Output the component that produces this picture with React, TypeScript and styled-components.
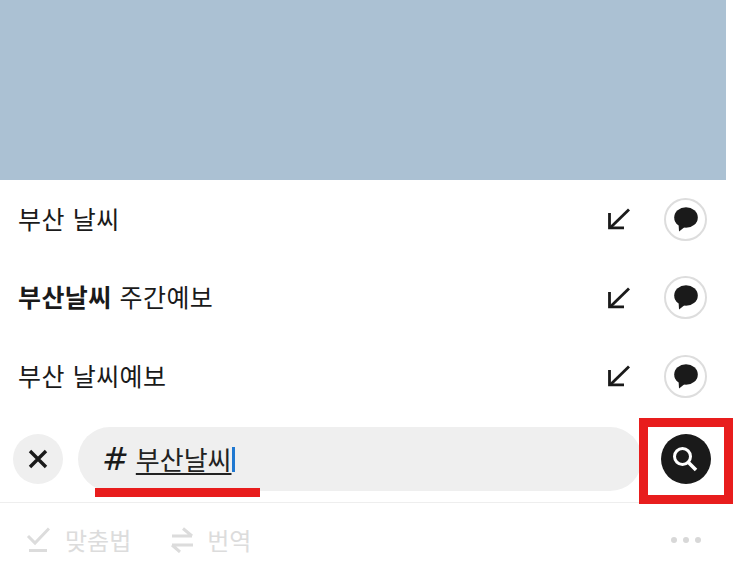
import React from "react";
import styled, { createGlobalStyle } from "styled-components";

const Global = createGlobalStyle`
  html, body { margin: 0; padding: 0; background: #fff; }
  body { font-family: "Roboto", "Noto Sans CJK KR", sans-serif; overflow: hidden; }
`;

const Page = styled.div`
  position: relative;
  width: 733px;
  height: 577px;
  overflow: hidden;
  background: #fff;
`;

const Column = styled.div`
  width: 726px;
`;

const Banner = styled.div`
  height: 180px;
  background: #abc1d3;
`;

const List = styled.ul`
  list-style: none;
  margin: 0;
  padding: 0;
  height: 236px;
`;

const Row = styled.li`
  display: flex;
  align-items: center;
  height: 78.5px;
  padding: 0 19px 0 18px;
  box-sizing: border-box;
`;

const RowText = styled.span`
  flex: 1;
  margin-bottom: 3px;
  font-family: "Noto Sans CJK KR", sans-serif;
  font-size: 25px;
  line-height: 32px;
  color: #1a1a1a;
  letter-spacing: 0.4px;
  word-spacing: 2px;
  b { font-weight: 700; }
`;

const ArrowIcon = styled.svg`
  width: 26px;
  height: 26px;
  margin-right: 32px;
  flex: none;
`;

const BubbleButton = styled.span`
  display: flex;
  align-items: center;
  justify-content: center;
  width: 43px;
  height: 43px;
  border: 2px solid #dddddd;
  border-radius: 50%;
  box-sizing: border-box;
  flex: none;
`;

const InputRow = styled.div`
  display: flex;
  align-items: center;
  height: 86px;
  padding: 0 15px 0 13px;
  box-sizing: border-box;
`;

const CloseButton = styled.span`
  display: flex;
  align-items: center;
  justify-content: center;
  width: 50px;
  height: 50px;
  border-radius: 50%;
  background: #efefef;
  flex: none;
`;

const Pill = styled.div`
  display: flex;
  align-items: center;
  width: 564px;
  height: 64px;
  margin: 0 19px 0 15px;
  padding-left: 24px;
  box-sizing: border-box;
  border-radius: 32px;
  background: #efefef;
  flex: none;
`;

const Hash = styled.span`
  font-family: "DejaVu Sans", sans-serif;
  font-size: 32px;
  font-style: oblique;
  line-height: 36px;
  color: #1a1a1a;
  margin-right: 7px;
`;

const Query = styled.span`
  font-family: "Noto Sans CJK KR", sans-serif;
  font-size: 26px;
  line-height: 32px;
  color: #222;
  text-decoration: underline;
  text-underline-offset: 3px;
  text-decoration-thickness: 1.5px;
`;

const Caret = styled.span`
  width: 3px;
  height: 25px;
  background: #1f78d1;
  flex: none;
`;

const SearchButton = styled.span`
  display: flex;
  align-items: center;
  justify-content: center;
  width: 50px;
  height: 50px;
  border-radius: 50%;
  background: #1a1a1a;
  flex: none;
`;

const Toolbar = styled.div`
  display: flex;
  align-items: center;
  height: 75px;
  padding: 0 25px 0 26px;
  border-top: 1px solid #eeeeee;
  box-sizing: border-box;
`;

const Tool = styled.span<{ $gap: number; $after: number }>`
  display: flex;
  align-items: center;
  margin-right: ${(p) => p.$after}px;
  font-family: "Noto Sans CJK KR", sans-serif;
  font-size: 24px;
  line-height: 32px;
  color: #dcdcdc;
  svg { margin-right: ${(p) => p.$gap}px; flex: none; }
`;

const Dots = styled.span`
  display: flex;
  gap: 6px;
  margin-left: auto;
`;

const Dot = styled.i`
  display: block;
  width: 6px;
  height: 6px;
  border-radius: 50%;
  background: #d8d8d8;
`;

const RedUnderline = styled.div`
  position: absolute;
  left: 95px;
  top: 488px;
  width: 165px;
  height: 9px;
  background: #e81d1d;
`;

const RedBox = styled.div`
  position: absolute;
  left: 639px;
  top: 418px;
  width: 94px;
  height: 86px;
  border: 9px solid #e81d1d;
  box-sizing: border-box;
`;

const Arrow = () => (
  <ArrowIcon viewBox="0 0 26 26" fill="none" stroke="#1a1a1a" strokeWidth="2.8">
    <path d="M23 3.500 L4 22" />
    <path d="M3.500 7 V21.800 H18" />
  </ArrowIcon>
);

const Bubble = () => (
  <BubbleButton>
    <svg width="24" height="25" viewBox="0 0 24 25" fill="#1a1a1a">
      <ellipse cx="12" cy="10.500" rx="11.800" ry="10.300" />
      <path d="M4.500 16 L5 24.500 L12 19 Z" />
    </svg>
  </BubbleButton>
);

export default function App() {
  return (
    <Page>
      <Global />
      <Column>
        <Banner />
        <List>
          <Row>
            <RowText>부산 날씨</RowText>
            <Arrow />
            <Bubble />
          </Row>
          <Row>
            <RowText>
              <b>부산날씨</b> 주간예보
            </RowText>
            <Arrow />
            <Bubble />
          </Row>
          <Row>
            <RowText>부산 날씨예보</RowText>
            <Arrow />
            <Bubble />
          </Row>
        </List>
        <InputRow>
          <CloseButton>
            <svg width="20" height="20" viewBox="0 0 20 20" stroke="#1a1a1a" strokeWidth="3.4">
              <path d="M2 2 L18 18 M18 2 L2 18" />
            </svg>
          </CloseButton>
          <Pill>
            <Hash>#</Hash>
            <Query>부산날씨</Query>
            <Caret />
          </Pill>
          <SearchButton>
            <svg width="26" height="26" viewBox="0 0 26 26" fill="none" stroke="#fff">
              <circle cx="9.500" cy="10.500" r="8" strokeWidth="3" />
              <path d="M15.500 16.500 L23 24" strokeWidth="3.600" />
            </svg>
          </SearchButton>
        </InputRow>
        <Toolbar>
          <Tool $gap={15} $after={39}>
            <svg width="24" height="26" viewBox="0 0 24 26" fill="none" stroke="#dcdcdc">
              <path d="M2 9 L9 16 L23 1.500" strokeWidth="3" />
              <path d="M3 23.500 H21" strokeWidth="3" />
            </svg>
            맞춤법
          </Tool>
          <Tool $gap={13} $after={0}>
            <svg width="24" height="26" viewBox="0 0 24 26" fill="none" stroke="#dcdcdc" strokeWidth="3">
              <path d="M2 9 H22 M13 1.500 L22 9" />
              <path d="M23 18 H2 M10 25 L2 18" />
            </svg>
            번역
          </Tool>
          <Dots>
            <Dot />
            <Dot />
            <Dot />
          </Dots>
        </Toolbar>
      </Column>
      <RedUnderline />
      <RedBox />
    </Page>
  );
}
